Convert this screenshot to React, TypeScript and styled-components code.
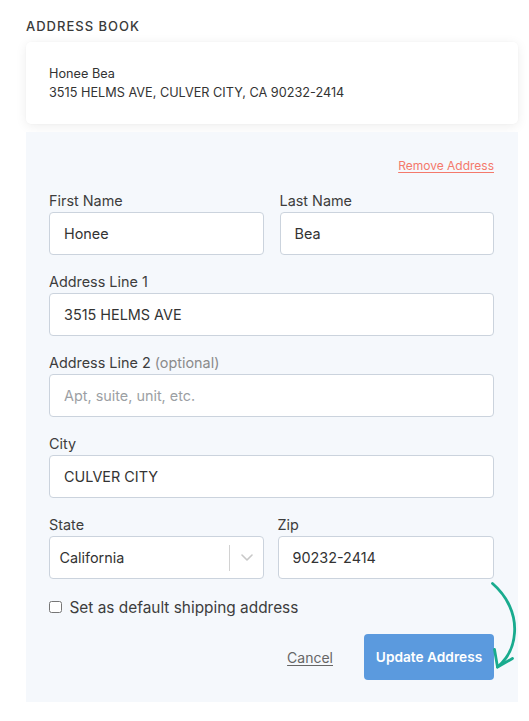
import React from "react";
import styled, { createGlobalStyle } from "styled-components";

const GlobalStyle = createGlobalStyle`
  html, body { margin: 0; padding: 0; background: #ffffff; }
  body { font-family: Inter, "Noto Sans", "Liberation Sans", sans-serif; color: #333; -webkit-font-smoothing: antialiased; }
  * { box-sizing: border-box; }
`;

const Page = styled.div`
  width: 529px;
  padding: 17.5px 11px 19px 26px;
`;

const Title = styled.h2`
  margin: 0 0 8.5px;
  font-size: 13px;
  line-height: 16px;
  font-weight: 500;
  letter-spacing: 1px;
  color: #3a3a3a;
  text-transform: uppercase;
`;

const SummaryCard = styled.div`
  background: #fff;
  border-radius: 5px;
  padding: 23px 23px 22px;
  box-shadow: 0 2px 12px rgba(0, 0, 0, 0.075), 0 0 2px rgba(0, 0, 0, 0.03);
`;

const SummaryLine = styled.div`
  font-size: 12.7px;
  line-height: 18.5px;
  color: #333;
`;

const Panel = styled.form`
  position: relative;
  margin-top: 8px;
  background: #f5f8fc;
  padding: 26px 24px 22px 23px;
`;

const RemoveRow = styled.div`
  display: flex;
  justify-content: flex-end;
  margin-bottom: 19px;
`;

const RemoveLink = styled.a`
  font-size: 12px;
  line-height: 15px;
  color: #f4796b;
  text-decoration: underline;
  text-underline-offset: 2px;
  cursor: pointer;
`;

const Row = styled.div<{ $cols?: string; $gap?: number }>`
  display: grid;
  grid-template-columns: ${(p) => p.$cols ?? "1fr"};
  column-gap: ${(p) => p.$gap ?? 16}px;
  margin-bottom: 18px;
`;

const Field = styled.div`
  display: flex;
  flex-direction: column;
  min-width: 0;
`;

const Label = styled.label`
  font-size: 14.4px;
  line-height: 17px;
  color: #3d3d3d;
  margin-bottom: 3px;
`;

const Optional = styled.span`
  color: #8b8b8b;
`;

const TextInput = styled.input`
  height: 43px;
  width: 100%;
  border: 1px solid #cbd3dd;
  border-radius: 4px;
  background: #fff;
  padding: 0 14px;
  font-family: inherit;
  font-size: 14.4px;
  color: #333;
  outline: none;
  &::placeholder { color: #9c9fa4; }
`;

const SelectBox = styled.div`
  height: 43px;
  display: flex;
  align-items: stretch;
  border: 1px solid #cbd3dd;
  border-radius: 4px;
  background: #fff;
`;

const SelectValue = styled.div`
  flex: 1;
  display: flex;
  align-items: center;
  padding-left: 9.5px;
  font-size: 14.4px;
  color: #333;
`;

const SelectSeparator = styled.span`
  width: 1px;
  margin: 7.5px 0;
  background: #d2d2d2;
`;

const SelectIndicator = styled.span`
  display: flex;
  align-items: center;
  padding: 0 10px 0 10.5px;
`;

const CheckRow = styled.label`
  display: flex;
  align-items: center;
  height: 20px;
  font-size: 15.4px;
  color: #3d3d3d;
`;

const CheckBox = styled.input`
  appearance: none;
  width: 12.5px;
  height: 12.5px;
  margin: 0 8px 0 0;
  border: 1px solid #767676;
  border-radius: 2.5px;
  background: #fff;
`;

const Actions = styled.div`
  display: flex;
  justify-content: flex-end;
  align-items: center;
  gap: 31px;
  margin-top: 17px;
`;

const CancelLink = styled.a`
  font-size: 14px;
  color: #666;
  text-decoration: underline;
  text-underline-offset: 2px;
  cursor: pointer;
`;

const PrimaryButton = styled.button`
  height: 46px;
  width: 130px;
  border: none;
  border-radius: 4px;
  background: #5b9ade;
  color: #fff;
  font-family: inherit;
  font-size: 13.7px;
  font-weight: 600;
  cursor: pointer;
`;

const Arrow = styled.svg`
  position: absolute;
  left: 459px;
  top: 446px;
  overflow: visible;
  pointer-events: none;
`;

export default function App() {
  return (
    <>
      <GlobalStyle />
      <Page>
        <Title>Address Book</Title>
        <SummaryCard>
          <SummaryLine>Honee Bea</SummaryLine>
          <SummaryLine>3515 HELMS AVE, CULVER CITY, CA 90232-2414</SummaryLine>
        </SummaryCard>
        <Panel onSubmit={(e) => e.preventDefault()}>
          <RemoveRow>
            <RemoveLink>Remove Address</RemoveLink>
          </RemoveRow>
          <Row $cols="1fr 1fr" $gap={16}>
            <Field>
              <Label>First Name</Label>
              <TextInput defaultValue="Honee" />
            </Field>
            <Field>
              <Label>Last Name</Label>
              <TextInput defaultValue="Bea" />
            </Field>
          </Row>
          <Row>
            <Field>
              <Label>Address Line 1</Label>
              <TextInput defaultValue="3515 HELMS AVE" />
            </Field>
          </Row>
          <Row>
            <Field>
              <Label>
                Address Line 2 <Optional>(optional)</Optional>
              </Label>
              <TextInput placeholder="Apt, suite, unit, etc." />
            </Field>
          </Row>
          <Row>
            <Field>
              <Label>City</Label>
              <TextInput defaultValue="CULVER CITY" />
            </Field>
          </Row>
          <Row $cols="214.5px 1fr" $gap={14}>
            <Field>
              <Label>State</Label>
              <SelectBox>
                <SelectValue>California</SelectValue>
                <SelectSeparator />
                <SelectIndicator>
                  <svg width="12" height="7" viewBox="0 0 12 7">
                    <path d="M1 1 L6 6 L11 1" fill="none" stroke="#c8c8c8" strokeWidth="1.6" strokeLinecap="round" strokeLinejoin="round" />
                  </svg>
                </SelectIndicator>
              </SelectBox>
            </Field>
            <Field>
              <Label>Zip</Label>
              <TextInput defaultValue="90232-2414" />
            </Field>
          </Row>
          <CheckRow>
            <CheckBox type="checkbox" />
            Set as default shipping address
          </CheckRow>
          <Actions>
            <CancelLink>Cancel</CancelLink>
            <PrimaryButton type="button">Update Address</PrimaryButton>
          </Actions>
          <Arrow width="40" height="95" viewBox="0 0 40 95">
            <path d="M7.5 5.5 C 22 18, 31 36, 29.5 55 C 28.5 70, 21 82, 12.5 89" fill="none" stroke="#19ab8e" strokeWidth="2.8" strokeLinecap="round" />
            <path d="M9.5 71.5 L12.5 89 L27.5 80.5" fill="none" stroke="#19ab8e" strokeWidth="2.8" strokeLinecap="round" strokeLinejoin="round" />
          </Arrow>
        </Panel>
      </Page>
    </>
  );
}
